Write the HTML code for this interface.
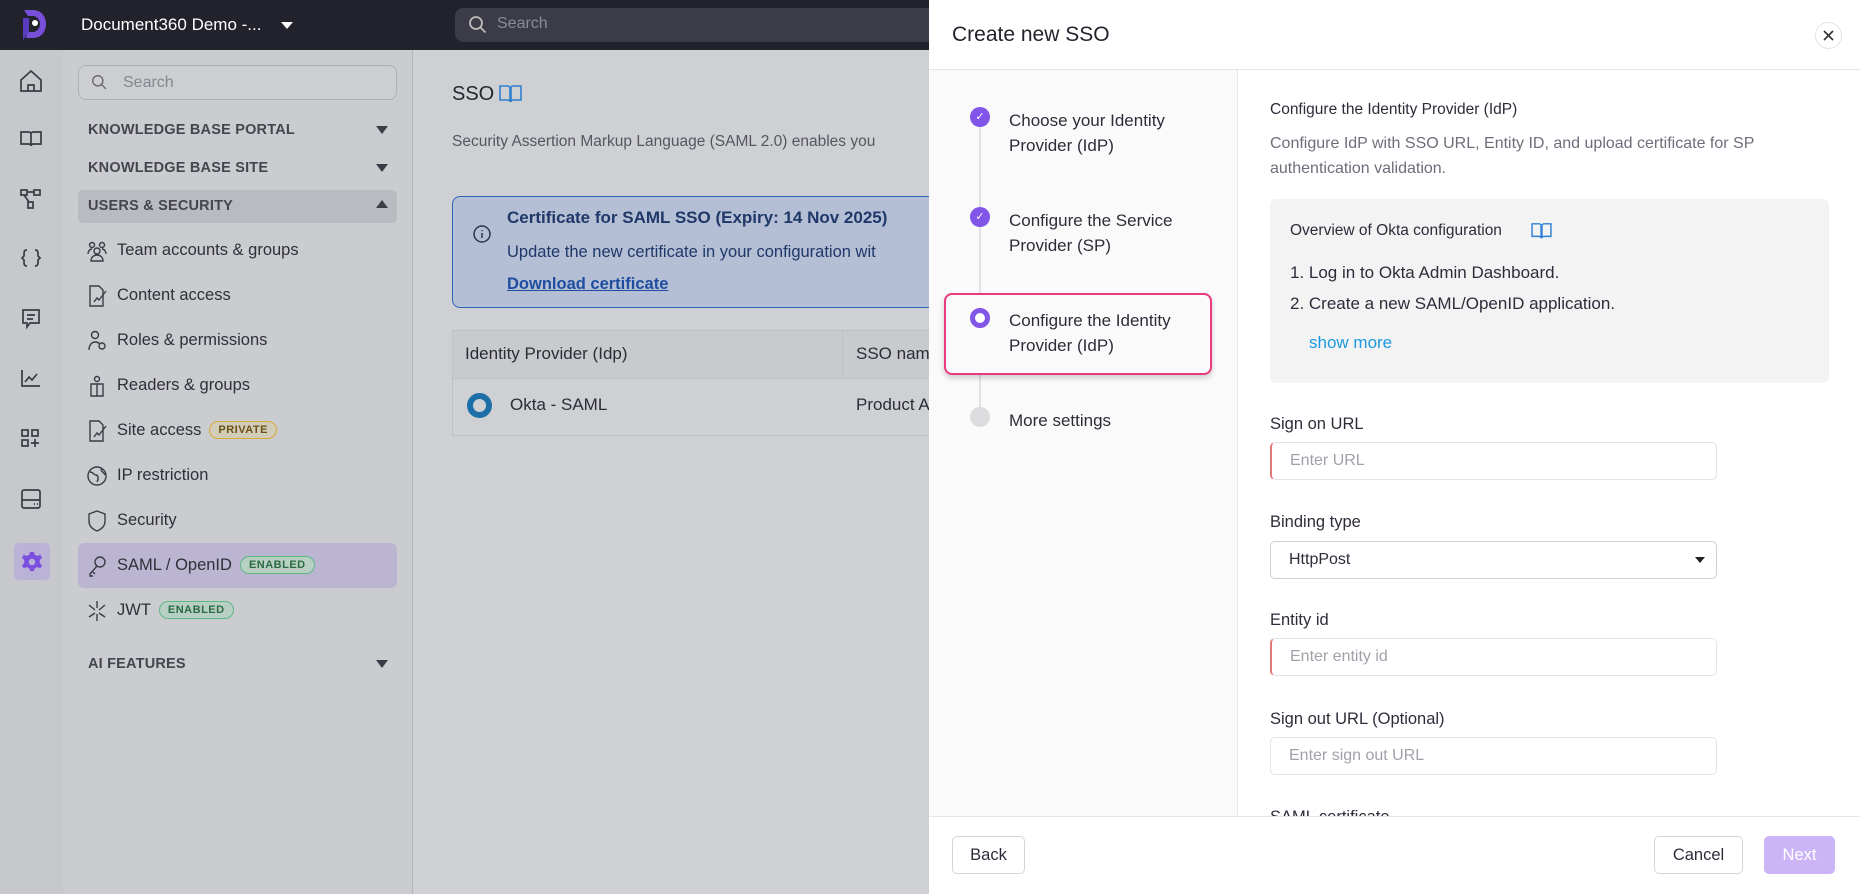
<!DOCTYPE html>
<html><head><meta charset="utf-8"><style>
*{box-sizing:border-box;margin:0;padding:0}
body{width:1860px;height:894px;overflow:hidden;font-family:"Liberation Sans",sans-serif;background:#cfd0d4;position:relative;color:#2b2c36}
.a{position:absolute}
.top{left:0;top:0;width:929px;height:50px;background:#21222c}
.rail{left:0;top:50px;width:63px;height:844px;background:#c7c8cc}
.side{left:63px;top:50px;width:350px;height:844px;background:#cbccd0;border-right:1px solid #b5b6ba}
.sh{left:88px;font-size:14.5px;font-weight:bold;color:#44454e;letter-spacing:.2px}
.car{left:376px;width:0;height:0;border-left:6px solid transparent;border-right:6px solid transparent;border-top:8px solid #3c3d46}
.it{left:117px;font-size:16.5px;color:#2f3039}
.ic{left:86px;width:22px;height:22px;fill:none;stroke:#3a3b44;stroke-width:1.4}
.badge{display:inline-block;font-size:11px;font-weight:bold;padding:2px 8px;border-radius:10px;margin-left:8px;vertical-align:2px;letter-spacing:.5px}
.en{background:#b8cfc4;border:1.5px solid #5cb885;color:#2b6a43}
.lab{left:1270px;font-size:16.5px;color:#2d2d3a}
.inp{left:1270px;width:447px;height:38px;border:1px solid #e3e4e8;border-radius:5px;font-size:16px;color:#a0a2aa;padding:9px 18px;background:#fff}
.req{border-left:2.5px solid #e57a7a}
.btn{height:38px;border:1px solid #d4d5da;border-radius:5px;font-size:16.5px;padding:9px 0;text-align:center;background:#fff;color:#2d2d3a}
.st{left:1009px;font-size:17px;line-height:25px;color:#2d2d3a}
.dot{left:970px;width:20px;height:20px;border-radius:50%;background:#8155e8}
</style></head><body>
<div class="a top"></div>
<svg class="a" style="left:20px;top:8px" width="28" height="34" viewBox="0 0 28 34"><path d="M4 2h9c8 0 13 6 13 14s-5 14-13 14H6l2-6h5c4 0 7-4 7-8s-3-8-7-8H8z" fill="#7650d8"/><path d="M3 10h6v14l-6 8z" fill="#5b3cc0"/><circle cx="15" cy="15" r="3" fill="#fff"/></svg>
<div class="a" style="left:81px;top:15px;font-size:17px;color:#fff">Document360 Demo -...</div>
<div class="a" style="left:281px;top:22px;border-left:6px solid transparent;border-right:6px solid transparent;border-top:7px solid #fff"></div>
<div class="a" style="left:455px;top:8px;width:480px;height:34px;background:#3b3c47;border-radius:8px"></div>
<svg class="a" style="left:468px;top:15px" width="20" height="20" viewBox="0 0 20 20"><circle cx="8" cy="8" r="6" fill="none" stroke="#bbb" stroke-width="1.8"/><path d="M12.5 12.5l5 5" stroke="#bbb" stroke-width="1.8"/></svg>
<div class="a" style="left:497px;top:15px;font-size:16px;color:#8a8b94">Search</div>

<div class="a rail"></div>
<svg class="a" style="left:0;top:50px" width="63" height="560" viewBox="0 50 63 560" fill="none" stroke="#3a3b44" stroke-width="1.7">
<path d="M21 80l10-9 10 9v11H21z"/><path d="M28 91v-6h6v6"/>
<path d="M21 132h8c1 0 2 1 2 2v12c0-1-1-2-2-2h-8zM41 132h-8c-1 0-2 1-2 2v12c0-1 1-2 2-2h8z"/>
<rect x="21" y="190" width="6" height="5"/><rect x="34" y="190" width="6" height="5"/><rect x="28" y="202" width="5" height="6"/><path d="M27 192h7M24 195l5 7"/>
<path d="M27 250c-3 0-3 2-3 4v2l-2 2 2 2v2c0 2 0 4 3 4M35 250c3 0 3 2 3 4v2l2 2-2 2v2c0 2 0 4-3 4"/>
<path d="M23 310h16v13h-9l-3 4v-4h-4z"/><path d="M27 315h8M27 319h6"/>
<path d="M22 370v16h18"/><path d="M25 382l4-5 3 3 5-6"/>
<rect x="22" y="430" width="6" height="6"/><rect x="32" y="430" width="6" height="6"/><rect x="22" y="440" width="6" height="6"/><path d="M35 439v8M31 443h8"/>
<rect x="22" y="490" width="18" height="18" rx="2"/><path d="M22 500h18M34 504h1M37 504h1"/>
</svg>
<div class="a" style="left:14px;top:543px;width:36px;height:37px;background:#bbb3d7;border-radius:5px"></div>
<svg class="a" style="left:21px;top:551px" width="22" height="22" viewBox="0 0 24 24"><path fill="#7b4fe0" d="M10 1h4l1 3 3 1.5 3-1.5 2 3.5-2.5 2.2v3.6L23 15.5 21 19l-3-1.5-3 1.5-1 3h-4l-1-3-3-1.5L3 19l-2-3.5 2.5-2.2V9.7L1 7.5 3 4l3 1.5L9 4z"/><circle cx="12" cy="12" r="3.5" fill="#bbb3d7"/></svg>

<div class="a side"></div>
<div class="a" style="left:78px;top:65px;width:319px;height:35px;border:1px solid #aeafb4;border-radius:8px;background:#cdced2"></div>
<svg class="a" style="left:91px;top:74px" width="17" height="17" viewBox="0 0 20 20"><circle cx="8" cy="8" r="6" fill="none" stroke="#666" stroke-width="1.6"/><path d="M12.5 12.5l5 5" stroke="#666" stroke-width="1.6"/></svg>
<div class="a" style="left:123px;top:74px;font-size:16px;color:#85868e">Search</div>
<div class="a sh" style="top:122px">KNOWLEDGE BASE PORTAL</div><div class="a car" style="top:126px"></div>
<div class="a sh" style="top:160px">KNOWLEDGE BASE SITE</div><div class="a car" style="top:164px"></div>
<div class="a" style="left:78px;top:190px;width:319px;height:33px;background:#babbc0;border-radius:5px"></div>
<div class="a sh" style="top:198px">USERS &amp; SECURITY</div><div class="a" style="left:376px;top:200px;border-left:6px solid transparent;border-right:6px solid transparent;border-bottom:8px solid #3c3d46"></div>
<div class="a" style="left:78px;top:543px;width:319px;height:45px;background:#bcb5d2;border-radius:6px"></div>

<svg class="a ic" style="top:240px" viewBox="0 0 22 22"><circle cx="6" cy="5" r="2.5"/><circle cx="16" cy="5" r="2.5"/><circle cx="11" cy="11" r="3"/><path d="M5 21c0-4 3-6 6-6s6 2 6 6zM2 14c0-3 2-5 4-5M20 14c0-3-2-5-4-5"/></svg>
<svg class="a ic" style="top:285px" viewBox="0 0 22 22"><path d="M4 1h9l4 4v16H4zM8 17l3-4 2 2 7-9"/></svg>
<svg class="a ic" style="top:330px" viewBox="0 0 22 22"><circle cx="9" cy="5" r="3.5"/><path d="M3 20c0-5 3-8 6-8s4 1 5 2"/><circle cx="16" cy="16" r="3"/></svg>
<svg class="a ic" style="top:375px" viewBox="0 0 22 22"><circle cx="11" cy="4" r="2.5"/><path d="M5 9h12v12H5zM11 9v12"/></svg>
<svg class="a ic" style="top:420px" viewBox="0 0 22 22"><path d="M4 1h9l4 4v16H4zM8 17l3-4 2 2 7-9"/></svg>
<svg class="a ic" style="top:465px" viewBox="0 0 22 22"><circle cx="11" cy="11" r="9"/><path d="M4 7c3 0 4 3 6 3s3 4 1 7M15 4c0 3 3 3 4 6"/></svg>
<svg class="a ic" style="top:510px" viewBox="0 0 22 22"><path d="M11 1l8 3v7c0 5-3 8-8 10-5-2-8-5-8-10V4z"/></svg>
<svg class="a ic" style="top:555px" viewBox="0 0 22 22"><circle cx="14" cy="7" r="5"/><path d="M11 11l-7 8v2h3M7 17l2 2"/></svg>
<svg class="a ic" style="top:600px" viewBox="0 0 22 22"><path d="M11 1v7M11 14v7M3 5l6 5M19 5l-6 5M3 17l6-4M19 17l-6-4"/></svg>

<div class="a it" style="top:241px">Team accounts &amp; groups</div>
<div class="a it" style="top:286px">Content access</div>
<div class="a it" style="top:331px">Roles &amp; permissions</div>
<div class="a it" style="top:376px">Readers &amp; groups</div>
<div class="a it" style="top:421px">Site access<span class="badge" style="background:#d2cdb8;border:1.5px solid #d9a93a;color:#6d5218">PRIVATE</span></div>
<div class="a it" style="top:466px">IP restriction</div>
<div class="a it" style="top:511px">Security</div>
<div class="a it" style="top:556px">SAML / OpenID<span class="badge en">ENABLED</span></div>
<div class="a it" style="top:601px">JWT<span class="badge en">ENABLED</span></div>
<div class="a sh" style="top:656px">AI FEATURES</div><div class="a car" style="top:660px"></div>

<div class="a" style="left:452px;top:83px;font-size:20px;color:#25262f">SSO</div>
<svg class="a" style="left:499px;top:84px" width="23" height="20" viewBox="0 0 23 20" fill="none" stroke="#2f80d0" stroke-width="1.6"><path d="M1 2h8c1 0 2 1 2 2v14c0-1-1-2-2-2H1zM22 2h-8c-1 0-2 1-2 2v14c0-1 1-2 2-2h8z"/></svg>
<div class="a" style="left:452px;top:133px;font-size:15.5px;color:#55565f;white-space:nowrap">Security Assertion Markup Language (SAML 2.0) enables you</div>
<div class="a" style="left:452px;top:196px;width:500px;height:112px;background:#b4bfd6;border:1.5px solid #2e62b6;border-radius:8px"></div>
<svg class="a" style="left:472px;top:224px" width="20" height="20" viewBox="0 0 20 20" fill="none" stroke="#2a3550" stroke-width="1.5"><circle cx="10" cy="10" r="8"/><path d="M10 9v5M10 6v1"/></svg>
<div class="a" style="left:507px;top:208px;font-size:17px;font-weight:bold;color:#1f3868;white-space:nowrap">Certificate for SAML SSO (Expiry: 14 Nov 2025)</div>
<div class="a" style="left:507px;top:243px;font-size:16.5px;color:#1f3868;white-space:nowrap">Update the new certificate in your configuration wit</div>
<div class="a" style="left:507px;top:275px;font-size:16.5px;font-weight:bold;color:#1f4ea0;text-decoration:underline">Download certificate</div>
<div class="a" style="left:452px;top:330px;width:500px;height:106px;border:1px solid #bfc0c5;background:#cfd0d4"></div>
<div class="a" style="left:452px;top:330px;width:500px;height:49px;background:#c9cace;border:1px solid #bfc0c5"></div>
<div class="a" style="left:842px;top:330px;width:1px;height:49px;background:#bfc0c5"></div>
<div class="a" style="left:465px;top:344px;font-size:17px;color:#2b2c36">Identity Provider (Idp)</div>
<div class="a" style="left:856px;top:344px;font-size:17px;color:#2b2c36">SSO nam</div>
<div class="a" style="left:467px;top:393px;width:25px;height:25px;border-radius:50%;border:6px solid #1d6fa8;background:#cfd0d4"></div>
<div class="a" style="left:510px;top:395px;font-size:17px;color:#2b2c36">Okta - SAML</div>
<div class="a" style="left:856px;top:395px;font-size:17px;color:#2b2c36">Product A</div>

<div class="a" style="left:929px;top:0;width:931px;height:894px;background:#fff"></div>
<div class="a" style="left:952px;top:23px;font-size:21px;color:#22232c">Create new SSO</div>
<div class="a" style="left:1815px;top:22px;width:27px;height:27px;border:1px solid #e2e3e7;border-radius:50%"></div>
<svg class="a" style="left:1822px;top:29px" width="13" height="13" viewBox="0 0 13 13" stroke="#333" stroke-width="1.6"><path d="M2 2l9 9M11 2l-9 9"/></svg>
<div class="a" style="left:929px;top:69px;width:931px;height:1px;background:#e3e5ee"></div>
<div class="a" style="left:929px;top:70px;width:309px;height:746px;background:#fafafa;border-right:1px solid #e3e5f0"></div>
<div class="a" style="left:979px;top:117px;width:2px;height:300px;background:#e2e2e6"></div>
<div class="a dot" style="top:107px;color:#fff;font-size:11px;text-align:center;line-height:20px">✓</div>
<div class="a dot" style="top:207px;color:#fff;font-size:11px;text-align:center;line-height:20px">✓</div>
<div class="a" style="left:944px;top:293px;width:268px;height:82px;border:2.5px solid #ea3a7d;border-radius:8px;box-shadow:0 3px 6px rgba(0,0,0,.18);background:#fafafa"></div>
<div class="a dot" style="top:308px;background:#fff;border:5px solid #8155e8"></div>
<div class="a dot" style="top:407px;background:#dcdcdf"></div>
<div class="a st" style="top:108px">Choose your Identity<br>Provider (IdP)</div>
<div class="a st" style="top:208px">Configure the Service<br>Provider (SP)</div>
<div class="a st" style="top:308px">Configure the Identity<br>Provider (IdP)</div>
<div class="a st" style="top:408px">More settings</div>

<div class="a" style="left:1270px;top:101px;font-size:15.5px;color:#2d2d3a">Configure the Identity Provider (IdP)</div>
<div class="a" style="left:1270px;top:131px;width:560px;font-size:16px;line-height:25px;color:#6c6f7a">Configure IdP with SSO URL, Entity ID, and upload certificate for SP authentication validation.</div>
<div class="a" style="left:1270px;top:199px;width:559px;height:184px;background:#f3f3f4;border-radius:6px"></div>
<div class="a" style="left:1290px;top:222px;font-size:15.5px;color:#2d2d3a">Overview of Okta configuration</div>
<svg class="a" style="left:1531px;top:222px" width="21" height="18" viewBox="0 0 23 20" fill="none" stroke="#2f80d0" stroke-width="1.6"><path d="M1 2h8c1 0 2 1 2 2v14c0-1-1-2-2-2H1zM22 2h-8c-1 0-2 1-2 2v14c0-1 1-2 2-2h8z"/></svg>
<div class="a" style="left:1290px;top:263px;font-size:17px;color:#2d2d3a">1. Log in to Okta Admin Dashboard.</div>
<div class="a" style="left:1290px;top:294px;font-size:17px;color:#2d2d3a">2. Create a new SAML/OpenID application.</div>
<div class="a" style="left:1309px;top:333px;font-size:17px;color:#1b9ae0">show more</div>
<div class="a lab" style="top:415px">Sign on URL</div>
<div class="a inp req" style="top:442px">Enter URL</div>
<div class="a lab" style="top:513px">Binding type</div>
<div class="a inp" style="top:541px;border-color:#cfd1d6;color:#2d2d3a">HttpPost</div>
<div class="a" style="left:1695px;top:557px;border-left:5px solid transparent;border-right:5px solid transparent;border-top:6px solid #222"></div>
<div class="a lab" style="top:611px">Entity id</div>
<div class="a inp req" style="top:638px">Enter entity id</div>
<div class="a lab" style="top:710px">Sign out URL (Optional)</div>
<div class="a inp" style="top:737px">Enter sign out URL</div>
<div class="a lab" style="top:808px">SAML certificate</div>

<div class="a" style="left:929px;top:816px;width:931px;height:78px;background:#fff;border-top:1px solid #e3e5ee"></div>
<div class="a btn" style="left:952px;top:836px;width:73px">Back</div>
<div class="a btn" style="left:1654px;top:836px;width:89px">Cancel</div>
<div class="a btn" style="left:1764px;top:836px;width:71px;background:#ccb5f6;border-color:#ccb5f6;color:#fff">Next</div>
</body></html>
